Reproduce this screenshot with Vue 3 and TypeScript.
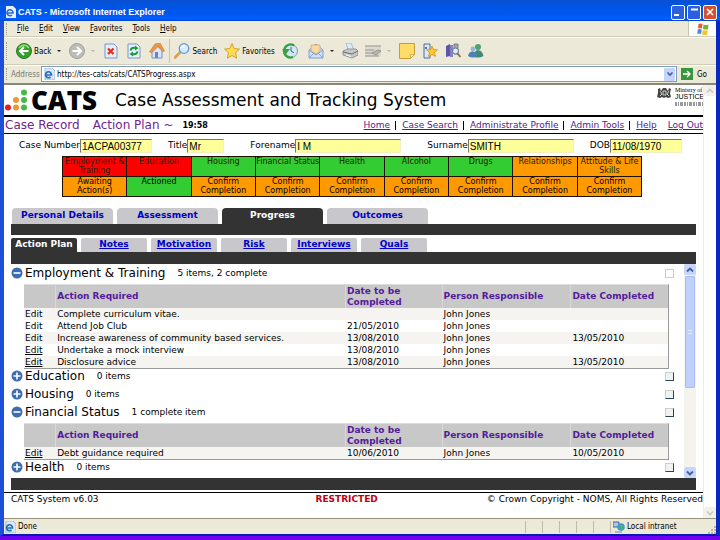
<script setup lang="ts">
import { ref } from 'vue'

type Tone = 'red' | 'green' | 'orange'
interface Pathway { name: string; tone: Tone; state: string; stateTone: Tone }
interface Action { text: string; due: string; person: string; done: string; underlined?: boolean }
interface Section { name: string; summary: string; open: boolean; faint?: boolean; actions: Action[] }

const menus = ['File', 'Edit', 'View', 'Favorites', 'Tools', 'Help']
const links = ['Home', 'Case Search', 'Administrate Profile', 'Admin Tools', 'Help', 'Log Out']
const tabs = ['Personal Details', 'Assessment', 'Progress', 'Outcomes']
const subTabs = ['Action Plan', 'Notes', 'Motivation', 'Risk', 'Interviews', 'Quals']

const fields = ref([
  { id: 'case-number', label: 'Case Number', value: '1ACPA00377', size: 'medium' },
  { id: 'title', label: 'Title', value: 'Mr', size: 'small' },
  { id: 'forename', label: 'Forename', value: 'I M', size: 'large' },
  { id: 'surname', label: 'Surname', value: 'SMITH', size: 'large' },
  { id: 'dob', label: 'DOB', value: '11/08/1970', size: 'medium' },
])
const address = ref('http://tes-cats/cats/CATSProgress.aspx')

const confirm = 'Confirm Completion'
const pathways: Pathway[] = [
  { name: 'Employment & Training', tone: 'red', state: 'Awaiting Action(s)', stateTone: 'orange' },
  { name: 'Education', tone: 'red', state: 'Actioned', stateTone: 'green' },
  { name: 'Housing', tone: 'green', state: confirm, stateTone: 'orange' },
  { name: 'Financial Status', tone: 'green', state: confirm, stateTone: 'orange' },
  { name: 'Health', tone: 'green', state: confirm, stateTone: 'orange' },
  { name: 'Alcohol', tone: 'green', state: confirm, stateTone: 'orange' },
  { name: 'Drugs', tone: 'green', state: confirm, stateTone: 'orange' },
  { name: 'Relationships', tone: 'orange', state: confirm, stateTone: 'orange' },
  { name: 'Attitude & Life Skills', tone: 'orange', state: confirm, stateTone: 'orange' },
]

const person = 'John Jones'
const sections: Section[] = [
  {
    name: 'Employment & Training', summary: '5 items, 2 complete', open: true, faint: true,
    actions: [
      { text: 'Complete curriculum vitae.', due: '', person, done: '' },
      { text: 'Attend Job Club', due: '21/05/2010', person, done: '' },
      { text: 'Increase awareness of community based services.', due: '13/08/2010', person, done: '13/05/2010' },
      { text: 'Undertake a mock interview', due: '13/08/2010', person, done: '', underlined: true },
      { text: 'Disclosure advice', due: '13/08/2010', person, done: '13/05/2010', underlined: true },
    ],
  },
  { name: 'Education', summary: '0 items', open: false, actions: [] },
  { name: 'Housing', summary: '0 items', open: false, actions: [] },
  {
    name: 'Financial Status', summary: '1 complete item', open: true,
    actions: [{ text: 'Debt guidance required', due: '10/06/2010', person, done: '10/05/2010', underlined: true }],
  },
  { name: 'Health', summary: '0 items', open: false, actions: [] },
]
</script>

<template>
  <div class="desktop">
    <div class="window">
      <header class="titlebar">
        <svg class="ie" viewBox="0 0 12 12"><path d="M2 0h7l3 3v9H2z" fill="#e8f0ff" /><path d="M3 7h6a3 3 0 1 0-1 2" fill="none" stroke="#2868c8" stroke-width="1.6" /></svg>
        <span class="title">CATS - Microsoft Internet Explorer</span>
        <div class="controls">
          <button class="ctl" aria-label="Minimize"><svg viewBox="0 0 12 12"><path d="M2 9h5" stroke="#fff" stroke-width="2" /></svg></button>
          <button class="ctl" aria-label="Restore"><svg viewBox="0 0 12 12"><path d="M3 3.500h7" stroke="#fff" stroke-width="2" /></svg></button>
          <button class="ctl close" aria-label="Close"><svg viewBox="0 0 12 12"><path d="M3 3l6 6M9 3l-6 6" stroke="#fff" stroke-width="1.700" /></svg></button>
        </div>
      </header>

      <nav class="menubar">
        <i class="grip"></i>
        <button v-for="m in menus" :key="m" class="menu"><u>{{ m[0] }}</u>{{ m.slice(1) }}</button>
        <span class="flag"><svg viewBox="0 0 14 12"><path d="M2.500 1q2-1 4 0L6 5.500q-2-1-4 0z" fill="#e85a28" /><path d="M7.500 1.500q2.500 1 5 0L12 6q-2.500 1-5 0z" fill="#78b428" /><path d="M1.800 6.500q2-1 4 0L5.200 11q-2-1-4 0z" fill="#4888d8" /><path d="M6.800 7q2.500 1 5 0l-.6 4.500q-2.500 1-5 0z" fill="#f8c020" /></svg></span>
      </nav>

      <div class="toolbar">
        <i class="grip"></i>
        <button class="tool">
          <svg viewBox="0 0 16 16"><circle cx="8" cy="8" r="7.500" fill="#35a02c" stroke="#2a7a28" /><path d="M3 5q5-6 10 0" stroke="#9ade80" stroke-width="1.500" fill="none" /><path d="M12.500 8H4.500M8 4L4 8l4 4" fill="none" stroke="#fff" stroke-width="2" /></svg>
          <span>Back</span><i class="drop"></i>
        </button>
        <button class="tool" aria-label="Forward">
          <svg viewBox="0 0 16 16"><circle cx="8" cy="8" r="7.500" fill="#bcbcb8" stroke="#a0a09c" /><path d="M3.500 8h8M8 4l4 4-4 4" fill="none" stroke="#fff" stroke-width="2" /></svg>
          <i class="drop pale"></i>
        </button>
        <button class="tool" aria-label="Stop">
          <svg viewBox="0 0 16 16"><path d="M2 1h9l3 3v11H2z" fill="#e4edfc" stroke="#7896d0" /><path d="M5 5.500l5.500 5.500M10.500 5.500L5 11" stroke="#e03018" stroke-width="2.200" /></svg>
        </button>
        <button class="tool" aria-label="Refresh">
          <svg viewBox="0 0 16 16"><path d="M2 1h9l3 3v11H2z" fill="#e4f3f8" stroke="#7896d0" /><path d="M4.500 7.500q1-3.500 5-2.500M11.500 8.500q-1 3.500-5 2.500" fill="none" stroke="#20983c" stroke-width="2" /><path d="M9 2.500l3.500 2.800L9 7.500zM7 8.500L3.500 11 7 13.500z" fill="#20983c" /></svg>
        </button>
        <button class="tool" aria-label="Home">
          <svg viewBox="0 0 16 16"><path d="M3 8v7h10V7L8 3z" fill="#dce6fa" stroke="#7890c8" /><path d="M0.500 9L6 1l5-1 4.500 8-2 .5L9.500 3 3 9.500z" fill="#f0983c" stroke="#c87028" stroke-width=".6" /><path d="M6 9h3v6H6z" fill="#6884c4" /></svg>
        </button>
        <i class="sep"></i>
        <button class="tool">
          <svg viewBox="0 0 16 16"><path d="M1 14.500L6 9.500" stroke="#d8a050" stroke-width="2.600" stroke-linecap="round" /><circle cx="10" cy="5.500" r="4.800" fill="#d4ecff" stroke="#6898d8" stroke-width="1.300" /><path d="M7.500 5q1-2.500 3.500-2" fill="none" stroke="#fff" stroke-width="1.300" /></svg>
          <span>Search</span>
        </button>
        <button class="tool">
          <svg viewBox="0 0 16 16"><path d="M8 .5l2.200 5 5.300.6-4 3.600 1.200 5.500L8 12.500l-4.700 2.700 1.200-5.500-4-3.600 5.300-.6z" fill="#ffdc50" stroke="#d09a20" stroke-width=".9" /></svg>
          <span>Favorites</span>
        </button>
        <button class="tool" aria-label="History">
          <svg viewBox="0 0 16 16"><circle cx="9" cy="8" r="6.500" fill="#cfe6f4" stroke="#7c9aa8" /><path d="M9 4v4l3 2" fill="none" stroke="#406080" /><path d="M12 2.500A6.500 6.500 0 1 0 11 14" fill="none" stroke="#38a040" stroke-width="2.300" /><path d="M0 6l8 0-4 5z" fill="#38a040" /></svg>
        </button>
        <button class="tool mail" aria-label="Mail">
          <svg viewBox="0 0 16 16"><path d="M1 7l7-6 7 6v8H1z" fill="#cfe2fa" stroke="#7ba0d8" /><path d="M3 2h9v6l-4 3-5-3z" fill="#fbd8a0" stroke="#dda660" stroke-width=".8" /><path d="M1 7l7 5 7-5M1 15l5-5M15 15l-5-5" fill="none" stroke="#7ba0d8" /></svg>
          <i class="drop"></i>
        </button>
        <button class="tool" aria-label="Print">
          <svg viewBox="0 0 16 16"><path d="M4 0h5l3 7H6z" fill="#d8eafc" stroke="#90b0d8" stroke-width=".8" /><path d="M1 8l5-2h8l2 2v4l-6 3-9-3z" fill="#c8c8c8" stroke="#808488" stroke-width=".8" /><path d="M1 9l9 2 6-3" fill="none" stroke="#666c74" /><path d="M4 12l5 1.500" stroke="#fff" /></svg>
        </button>
        <button class="tool" aria-label="Edit">
          <svg viewBox="0 0 16 16"><path d="M0 2.500h16v11H0z" fill="#dcdad0" /><path d="M0 3h16M0 7h9M0 10h8M0 13h14" stroke="#96968e" stroke-width="1.200" /><path d="M7 10l6-3 3 1-5 4z" fill="#b8b8b0" stroke="#88887e" stroke-width=".8" /></svg>
          <i class="drop pale"></i>
        </button>
        <button class="tool" aria-label="Note">
          <svg viewBox="0 0 16 16"><path d="M.5 .5h15v11l-4 4H.5z" fill="#ffdc68" stroke="#c89c38" /><path d="M11.500 15.500v-4h4z" fill="#fff0b0" stroke="#c89c38" stroke-width=".7" /></svg>
        </button>
        <button class="tool" aria-label="Bookmark">
          <svg viewBox="0 0 16 16"><path d="M2 1h6v14H2z" fill="#d8e8fa" stroke="#506c98" /><circle cx="4" cy="5" r="1" fill="#304870" /><path d="M10 3l1.600 3.400 3.900.4-3 2.600 1 4L10 11.500 6.500 13.400l1-4-3-2.600 3.900-.4z" fill="#ffc430" stroke="#d08c18" stroke-width=".7" /></svg>
        </button>
        <button class="tool" aria-label="Research">
          <svg viewBox="0 0 16 16"><path d="M1 3l4-2v12l-4 1z" fill="#5858a8" /><path d="M5 2h3v12H5z" fill="#8c7cc0" /><path d="M9 1h4v10H9z" fill="#a8a8b4" stroke="#60606c" stroke-width=".7" /><circle cx="10.500" cy="8" r="3" fill="#d8f0fc" stroke="#607890" /><path d="M12.500 10.500l3 3.500" stroke="#886640" stroke-width="1.700" /></svg>
        </button>
        <button class="tool" aria-label="Messenger">
          <svg viewBox="0 0 16 16"><circle cx="10" cy="4" r="3" fill="#50a070" /><path d="M6 14q0-7 4-7t5.500 6q-4 2.500-9.500 1z" fill="#3c8a78" /><circle cx="5" cy="6" r="2.400" fill="#90b8d8" /><path d="M0 13q1-5 5-4.500T9 13q-4 3-9 0z" fill="#5080b8" /></svg>
        </button>
      </div>

      <div class="addressbar">
        <i class="grip"></i>
        <label for="address" class="address-label">Address</label>
        <div class="address-box">
          <svg class="ie" viewBox="0 0 12 12"><path d="M2 0h7l3 3v9H2z" fill="#dce8fa" stroke="#88a0d0" stroke-width=".7" /><path d="M2.500 7h6a3 3 0 1 0-1 2" fill="none" stroke="#2070c0" stroke-width="1.700" /></svg>
          <input id="address" v-model="address" />
          <button class="pick" aria-label="Show addresses"><svg viewBox="0 0 10 10"><path d="M2.500 3.500L5 6l2.500-2.500" fill="none" stroke="#4060a0" stroke-width="1.600" /></svg></button>
        </div>
        <button class="go"><svg viewBox="0 0 12 12"><path d="M0 0h12v12H0z" fill="#38963c" /><path d="M2 6h7M6 3l3 3-3 3" fill="none" stroke="#fff" stroke-width="1.400" /></svg><span>Go</span></button>
      </div>

      <div class="viewport">
        <main class="page">
          <div class="brand">
            <svg class="dots" viewBox="0 0 24 22"><g fill="#46b848"><circle cx="20" cy="3.500" r="3" /><circle cx="20" cy="11" r="3" /><circle cx="20" cy="18.500" r="3" /></g><g fill="#f09830"><circle cx="12" cy="11" r="3" /><circle cx="12" cy="18.500" r="3" /></g><circle cx="4" cy="18.500" r="3" fill="#dc2028" /></svg>
            <span class="logo">CATS</span>
            <h1>Case Assessment and Tracking System</h1>
            <div class="ministry">
              <svg class="crest" viewBox="0 0 15 12"><path d="M1 2l2-1 1 3 2-3h3l2 3 1-3 2 1-1 4 1 4-3 1-2-1-2 1-2-1-2 1-3-1 1-4z" fill="#444" /><path d="M3 4l2 3-2 2M12 4l-2 3 2 2M6 4h3v4H6z" fill="none" stroke="#ddd" stroke-width=".9" /></svg>
              <div class="ministry-name"><span>Ministry of</span><strong>JUSTICE</strong>
                <svg class="strap" viewBox="0 0 28 6"><path d="M0 2h28M0 4h28" stroke="#999" stroke-width="2" stroke-dasharray="2 1 1 1 3 1" /></svg>
              </div>
            </div>
          </div>

          <div class="crumbs">
            <h2><span>Case Record</span><span>Action Plan ~</span></h2>
            <time>19:58</time>
            <nav class="links">
              <template v-for="(l, i) in links" :key="l"><i v-if="i && i < 5" class="bar"></i><a href="#" :class="{ last: i === 5 }">{{ l }}</a></template>
            </nav>
          </div>

          <form class="fields" @submit.prevent>
            <div v-for="f in fields" :key="f.id" class="field" :class="f.size">
              <label :for="f.id">{{ f.label }}</label><input :id="f.id" v-model="f.value" />
            </div>
          </form>

          <table class="pathways">
            <tbody>
              <tr><td v-for="p in pathways" :key="p.name" :class="[p.tone, 'name']"><div>{{ p.name }}</div></td></tr>
              <tr><td v-for="p in pathways" :key="p.name" :class="p.stateTone"><div>{{ p.state }}</div></td></tr>
            </tbody>
          </table>

          <div class="body">
            <nav class="tabs"><a v-for="t in tabs" :key="t" href="#" :class="{ active: t === 'Progress' }">{{ t }}</a></nav>
            <div class="band"></div>
            <nav class="tabs sub"><a v-for="t in subTabs" :key="t" href="#" :class="{ active: t === 'Action Plan' }">{{ t }}</a></nav>
            <div class="band"></div>

            <div class="panel">
              <div class="sections">
                <section v-for="s in sections" :key="s.name">
                  <div class="section-head">
                    <button class="toggle" :aria-label="s.open ? 'Collapse' : 'Expand'">
                      <svg viewBox="0 0 12 12"><circle cx="6" cy="6" r="5.500" fill="#3c6cb4" /><path :d="s.open ? 'M2.500 6h7' : 'M2.500 6h7M6 2.500v7'" stroke="#fff" stroke-width="1.600" /></svg>
                    </button>
                    <h3>{{ s.name }}</h3>
                    <span class="summary">{{ s.summary }}</span>
                    <input type="checkbox" :class="{ faint: s.faint }" :aria-label="s.name" />
                  </div>
                  <table v-if="s.open" class="actions">
                    <colgroup><col class="c-edit" /><col class="c-action" /><col class="c-due" /><col class="c-person" /><col class="c-done" /></colgroup>
                    <thead><tr><th></th><th>Action Required</th><th class="wrap">Date to be Completed</th><th>Person Responsible</th><th>Date Completed</th></tr></thead>
                    <tbody>
                      <tr v-for="a in s.actions" :key="a.text">
                        <td><a href="#" :class="{ underlined: a.underlined }">Edit</a></td><td>{{ a.text }}</td><td>{{ a.due }}</td><td>{{ a.person }}</td><td>{{ a.done }}</td>
                      </tr>
                    </tbody>
                  </table>
                </section>
              </div>
              <div class="scroll">
                <button aria-label="Scroll up"><svg viewBox="0 0 10 10"><path d="M2 6.500L5 3.500l3 3" fill="none" stroke="#40609c" stroke-width="1.800" /></svg></button>
                <div class="thumb"><i></i></div>
                <button aria-label="Scroll down"><svg viewBox="0 0 10 10"><path d="M2 3.500l3 3 3-3" fill="none" stroke="#40609c" stroke-width="1.800" /></svg></button>
              </div>
            </div>
            <div class="band"></div>
          </div>

          <footer class="foot"><span>CATS System v6.03</span><strong>RESTRICTED</strong><span class="right">© Crown Copyright - NOMS, All Rights Reserved</span></footer>
        </main>
        <div class="page-scroll">
          <button disabled aria-label="Page up"><svg viewBox="0 0 10 10"><path d="M2 6.500L5 3.500l3 3" fill="none" stroke="#c8c8bc" stroke-width="1.600" /></svg></button>
          <button disabled aria-label="Page down"><svg viewBox="0 0 10 10"><path d="M2 3.500l3 3 3-3" fill="none" stroke="#c8c8bc" stroke-width="1.600" /></svg></button>
        </div>
      </div>

      <div class="statusbar">
        <svg class="ie" viewBox="0 0 12 12"><path d="M2 0h7l3 3v9H2z" fill="#dce8fa" stroke="#88a0d0" stroke-width=".7" /><path d="M2.500 7h6a3 3 0 1 0-1 2" fill="none" stroke="#2070c0" stroke-width="1.700" /></svg>
        <span class="done">Done</span>
        <i v-for="n in 5" :key="n" class="cell"></i>
        <span class="zone">
          <svg viewBox="0 0 12 12"><path d="M0 1h6v5H0z" fill="#a8c8f0" stroke="#406498" /><circle cx="8" cy="6" r="3.800" fill="#3c9cd0" /><path d="M6 4q3-1 4 1l-2 2zM7 8l3-1-1 3z" fill="#58b858" /><path d="M2 10h7v2H2z" fill="#b0b8c0" /></svg>
          Local intranet
        </span>
        <svg class="resize" viewBox="0 0 8 8"><g fill="#b8b4a0"><path d="M6 0h2v2H6zM6 3h2v2H6zM6 6h2v2H6zM3 3h2v2H3zM3 6h2v2H3zM0 6h2v2H0z" /></g></svg>
      </div>
    </div>
  </div>
</template>

<style>
body { margin: 0; background: #7000f0; }
</style>

<style scoped>
* { box-sizing: border-box; }
button { font: inherit; border: 0; padding: 0; background: none; color: inherit; }
svg { display: block; flex: none; }
h1, h2, h3 { margin: 0; font-weight: 400; }
.desktop { min-height: 100vh; display: flex; flex-direction: column; padding-bottom: 4px; background: #7000f0; font-family: "DejaVu Sans", Verdana, sans-serif; font-size: 9px; color: #000; }
.window { flex: 1; display: flex; flex-direction: column; border: 4px solid #1040d0; border-width: 0 4px 2px; border-color: #1040d0 #0828c0 #0818b0 #1c50d8; background: #ece9d8; white-space: nowrap; }

.titlebar { height: 21px; margin: 0 -4px; padding: 3px 3px 0 4px; display: flex; align-items: center; gap: 2px; background: linear-gradient(#0850d0, #0054e3 30%, #0058f0 70%, #0060ff 90%, #0040c8); color: #fff; }
.ie { width: 12px; height: 12px; }
.title { font: bold 9px "Liberation Sans", sans-serif; }
.controls { margin-left: auto; display: flex; gap: 2px; }
.ctl { width: 14px; height: 15px; display: grid; place-items: center; border: 1px solid #fff; border-radius: 2px; background: #2b5fe0; }
.ctl svg { width: 12px; height: 12px; }
.close { background: #d8502c; }

.menubar, .toolbar, .addressbar { display: flex; align-items: center; font-family: "DejaVu Sans Condensed", "DejaVu Sans", sans-serif; font-size: 8px; }
.grip { width: 1px; height: 12px; margin: 0 10px 0 2px; border-left: 1px dotted #a09c88; }
.menubar { height: 16px; border-bottom: 1px solid #d0ccba; gap: 10px; }
.menubar .grip { margin-right: 0; }
.flag { margin-left: auto; width: 28px; height: 15px; display: grid; place-items: center; background: #fff; border-left: 1px solid #c8c4b0; }
.flag svg { width: 14px; height: 12px; }
.toolbar { height: 28px; border-top: 1px solid #fff; border-bottom: 1px solid #d0ccba; gap: 7px; }
.toolbar .grip { height: 18px; margin-right: 2px; }
.tool { display: flex; align-items: center; gap: 2px; }
.tool svg { width: 16px; height: 16px; }
.mail { margin-left: 3px; }
.drop { margin: 0 1px 0 4px; border: 2px solid transparent; border-top-color: #222; border-bottom: 0; }
.pale { border-top-color: #b8b4a8; }
.sep { width: 1px; height: 24px; margin: 0 -3px; background: #c8c4b0; }
.addressbar { height: 17px; border-top: 1px solid #fff; }
.addressbar .grip { margin-right: 4px; }
.address-label { width: 30px; color: #777; }
.address-box { flex: 1; height: 16px; display: flex; align-items: center; padding: 0 1px; border: 1px solid #7f9db9; background: #fff; }
.address-box input { flex: 1; min-width: 0; border: 0; padding: 0 2px; outline: 0; font: 8px "DejaVu Sans Condensed", "DejaVu Sans", sans-serif; }
.pick { width: 11px; height: 13px; display: grid; place-items: center; background: #c4d4fa; border-radius: 1px; }
.pick svg { width: 10px; height: 10px; }
.go { display: flex; align-items: center; gap: 4px; padding: 0 9px 0 4px; }
.go svg { width: 12px; height: 12px; }

.viewport { flex: 1; display: flex; border-top: 2px solid #87877c; background: #fff; margin-top: 1px; }
.page { flex: 1; min-width: 0; display: flex; flex-direction: column; }
.page-scroll { width: 13px; display: flex; flex-direction: column; justify-content: space-between; border-left: 1px solid #f0ece8; }
.page-scroll button { height: 11px; display: grid; place-items: center; background: #f2f0e8; border-radius: 2px; }
.page-scroll svg { width: 10px; height: 10px; }

.brand { height: 32px; display: flex; align-items: center; border-bottom: 2px solid #000; }
.dots { width: 24px; height: 22px; margin-right: 3px; }
.logo { width: 84px; font: 800 26px/30px "Open Sans", "Noto Sans", sans-serif; }
h1 { font-size: 17px; line-height: 26px; }
.ministry { margin-left: auto; align-self: flex-start; padding-top: 2px; display: flex; gap: 3px; align-items: flex-start; }
.crest { width: 15px; height: 12px; }
.ministry-name { width: 28px; display: flex; flex-direction: column; font: 6px/6px "Liberation Serif", serif; }
.ministry-name strong { font: 7px/8px "Liberation Sans", sans-serif; }
.ministry-name .strap { width: 28px; height: 6px; }

.crumbs { height: 17px; display: flex; align-items: center; border-bottom: 1px solid #000; }
h2 { display: flex; gap: 13px; padding-left: 1px; font-size: 12px; color: #73238c; }
time { margin-left: 9px; font-weight: 700; font-size: 8px; }
.links { margin-left: auto; display: flex; align-items: center; gap: 5px; }
.links a { color: #551a8b; }
.links .last { margin-left: 6px; }
.bar { width: 1px; height: 9px; margin: 0 1px 0 0; background: #000; }

.fields { display: flex; justify-content: space-between; padding: 5px 21px 0 15px; }
.field { display: flex; align-items: flex-start; }
.field label { line-height: 13px; }
.field input { height: 14px; border: 1px solid #f4f0c0; border-top: 1px solid #777; border-left: 1px solid #777; padding: 0 1px; outline: 0; background: #ffff99; font: 10px "Liberation Sans", sans-serif; border-radius: 0; }
.medium input { width: 72px; }
.small input { width: 37px; }
.large { padding-left: 10px; }
.large input { width: 106px; }

.pathways { width: 83%; margin: 3px auto 0 58px; border-collapse: collapse; table-layout: fixed; text-align: center; white-space: normal; font-size: 8px; line-height: 9px; }
.pathways td { padding: 0; border: 1px solid #201000; vertical-align: top; }
.pathways div { height: 19px; }
.name { color: #202000; }
.red { background: #f00; }
.green { background: #33cc33; }
.orange { background: #f90; }

.body { padding: 11px 7px 2px; }
.tabs { display: flex; gap: 4px; padding-left: 1px; }
.tabs a { width: 101px; height: 16px; text-align: center; line-height: 14px; font-weight: 700; color: #0000c8; background: #c8c8cc; border-radius: 4px 4px 0 0; text-decoration: none; }
.tabs a.active { background: #333; color: #fff; }
.sub { padding: 3px 0 0; }
.sub a { width: 66px; height: 14px; line-height: 12px; border-radius: 2px 2px 0 0; text-decoration: underline; }
.sub a.active { text-decoration: none; }
.band { height: 12px; background: #333; }
.tabs + .band { height: 11px; }
.sub + .band { height: 12px; }

.panel { display: flex; }
.sections { flex: 1; padding: 2px 10px 0 0; }
.section-head { height: 18px; display: flex; align-items: center; padding-bottom: 4px; }
.toggle svg { width: 12px; height: 12px; }
h3 { margin-left: 2px; font-size: 12px; line-height: 14px; }
.summary { margin-left: 12px; }
.section-head input { appearance: none; width: 9px; height: 9px; margin: 1px 0 0 auto; border: 1px solid #c8d0d0; border-color: #c8d0d0 #284858 #284858 #c8d0d0; background: #f0f2f0; }
.section-head .faint { border-color: #d0ccc0; background: #fff; }
.actions { width: calc(100% - 18px); margin-left: 13px; border-collapse: separate; border-spacing: 0; table-layout: fixed; border: 1px solid #999; border-width: 1px 1px 1px 0; border-top-color: #ddd; line-height: 12px; }
.c-edit { width: 5%; }
.c-action { width: 45%; }
.c-due { width: 15%; }
.c-person { width: 20%; }
.c-done { width: 15%; }
.actions th { height: 23px; padding: 0 1px; background: #c8c8c8; color: #551a9b; text-align: left; border-right: 1px solid #d8d8d8; line-height: 11px; }
.actions th:last-child { border-right: 0; }
.actions .wrap { white-space: normal; padding-right: 30px; }
.actions td { height: 12px; padding: 0 1px; }
.actions tbody tr:nth-child(odd) td { background: #f5f4f1; }
.actions a { color: #000; text-decoration: none; }
.actions .underlined { text-decoration: underline; }

.scroll { width: 12px; display: flex; flex-direction: column; background: #f4f3ee; }
.scroll button { height: 11px; display: grid; place-items: center; background: #c8d6fb; border-radius: 2px; }
.scroll svg { width: 10px; height: 10px; }
.thumb { height: 112px; margin: 1px 1px auto; display: grid; place-items: center; background: #bfd0fa; border: 1px solid #a8bcf0; border-radius: 1px; }
.thumb i { width: 4px; height: 4px; border: 1px solid #e8f0ff; border-width: 1px 0; }

.foot { flex: 1; display: grid; grid-template-columns: 44% auto 1fr; padding: 0 0 0 7px; border-top: 1px solid #000; line-height: 12px; }
.foot strong { color: #c00010; }
.right { text-align: right; }

.statusbar { height: 16px; display: flex; align-items: center; border-top: 1px solid #98947c; font: 8px "DejaVu Sans Condensed", "DejaVu Sans", sans-serif; }
.done { flex: 1; padding-left: 2px; }
.cell { width: 17px; height: 12px; border-left: 1px solid #c0bca8; }
.zone { width: 98px; display: flex; align-items: center; gap: 2px; padding-left: 2px; border-left: 1px solid #c0bca8; }
.zone svg { width: 12px; height: 12px; }
.resize { width: 8px; height: 8px; align-self: flex-end; }
</style>
